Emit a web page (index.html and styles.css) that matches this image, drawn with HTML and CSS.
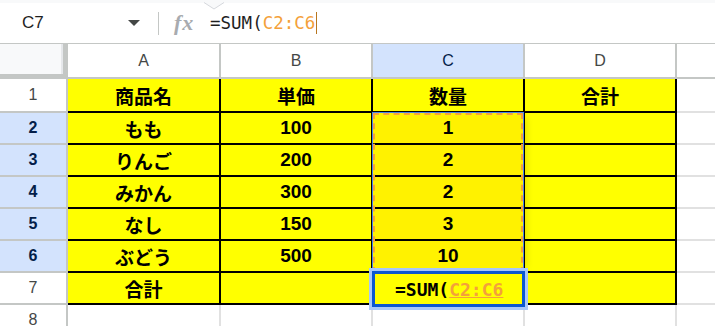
FILE: index.html
```html
<!DOCTYPE html>
<html lang="ja">
<head>
  <meta charset="UTF-8">
  <meta name="viewport" content="width=device-width, initial-scale=1.0">
  <title>Sheet - SUM</title>
  <link rel="stylesheet" href="styles.css">
</head>
<body>
  <!-- Bottom edge of a tooltip above the formula bar -->
  <div class="tip-strip">
    <svg class="tip-tail" width="20" height="8" viewBox="0 0 20 8"><path d="M0 0.5 L10 7 L20 0.5" fill="#f8f9fa" stroke="#d5d8dc" stroke-width="1"/></svg>
  </div>

  <!-- Formula bar -->
  <div class="formula-bar">
    <div class="name-box">
      <span>C7</span>
      <svg class="caret-down" width="12" height="6" viewBox="0 0 12 6"><path d="M0 0 H12 L6 6 Z" fill="#444746"/></svg>
    </div>
    <div class="divider"></div>
    <span class="fx">fx</span>
    <div class="formula">=SUM(<span class="ref">C2:C6</span><span class="cursor"></span></div>
  </div>

  <!-- Grid -->
  <div class="sheet">
    <div class="corner"></div>
    <div class="col-head">A</div>
    <div class="col-head">B</div>
    <div class="col-head selected">C</div>
    <div class="col-head">D</div>
    <div class="col-head last"></div>

    <div class="row-head">1</div>
    <div class="cell">商品名</div>
    <div class="cell">単価</div>
    <div class="cell">数量</div>
    <div class="cell">合計</div>
    <div class="blank"></div>

    <div class="row-head selected">2</div>
    <div class="cell">もも</div>
    <div class="cell">100</div>
    <div class="cell in-range">1<div class="range"></div></div>
    <div class="cell"></div>
    <div class="blank"></div>

    <div class="row-head selected">3</div>
    <div class="cell">りんご</div>
    <div class="cell">200</div>
    <div class="cell in-range">2</div>
    <div class="cell"></div>
    <div class="blank"></div>

    <div class="row-head selected">4</div>
    <div class="cell">みかん</div>
    <div class="cell">300</div>
    <div class="cell in-range">2</div>
    <div class="cell"></div>
    <div class="blank"></div>

    <div class="row-head selected">5</div>
    <div class="cell">なし</div>
    <div class="cell">150</div>
    <div class="cell in-range">3</div>
    <div class="cell"></div>
    <div class="blank"></div>

    <div class="row-head selected">6</div>
    <div class="cell">ぶどう</div>
    <div class="cell">500</div>
    <div class="cell in-range">10</div>
    <div class="cell"></div>
    <div class="blank"></div>

    <div class="row-head">7</div>
    <div class="cell">合計</div>
    <div class="cell"></div>
    <div class="cell active">=SUM(<span class="ref">C2:C6</span></div>
    <div class="cell"></div>
    <div class="blank"></div>

    <div class="row-head">8</div>
    <div class="empty"></div>
    <div class="empty"></div>
    <div class="empty"></div>
    <div class="empty"></div>
    <div class="empty last"></div>
  </div>
</body>
</html>
```

FILE: styles.css
```css
/* Reset */
* {
  margin: 0;
  padding: 0;
  box-sizing: border-box;
}

body {
  width: 715px;
  height: 326px;
  overflow: hidden;
  background: #fff;
  color: #000;
  font-family: "Liberation Sans", "Noto Sans CJK JP", Arial, sans-serif;
}

/* Tooltip edge */
.tip-strip {
  position: relative;
  height: 3px;
  background: #f8f9fa;
}

.tip-tail {
  position: absolute;
  left: 204px;
  top: 2px;
}

/* Formula bar */
.formula-bar {
  display: flex;
  align-items: center;
  height: 41px;
  border-bottom: 1px solid #c4c7c5;
}

.name-box {
  display: flex;
  align-items: center;
  width: 150px;
  padding-left: 22px;
  padding-right: 10px;
  font-size: 17px;
  color: #1f1f1f;
}

.caret-down {
  margin-left: auto;
}

.divider {
  width: 1px;
  height: 23px;
  margin-left: 8px;
  background: #c4c7c5;
}

.fx {
  display: inline-block;
  width: 24px;
  margin-left: 15px;
  font-family: "Liberation Serif", serif;
  font-style: italic;
  font-weight: bold;
  font-size: 22px;
  letter-spacing: 1px;
  color: #a8abaf;
}

.formula {
  display: flex;
  align-items: center;
  margin-left: 12px;
  font-family: "DejaVu Sans Mono", monospace;
  font-size: 17.5px;
  color: #1f1f1f;
}

.ref {
  color: #f4a13a;
}

.cursor {
  display: inline-block;
  width: 1px;
  height: 22px;
  margin-left: 1px;
  background: #b8761e;
}

/* Sheet grid */
.sheet {
  display: grid;
  grid-template-columns: 68px 153px 152px 152px 152px 38px;
  grid-template-rows: 35px 34px repeat(6, 32px) 32px;
}

.corner {
  background: #f8f9fa;
  border-right: 5px solid #c4c7c5;
  border-bottom: 5px solid #c4c7c5;
  box-shadow: inset -2px 0 #e6e8eb;
}

.col-head,
.row-head {
  display: flex;
  align-items: center;
  justify-content: center;
  border-right: 2px solid #c4c7c5;
  border-bottom: 2px solid #c4c7c5;
  font-size: 16px;
  color: #444746;
}

.col-head.last {
  border-right: none;
}

.col-head.selected {
  background: #d3e3fd;
  color: #041e49;
}

.row-head.selected {
  background: #d3e3fd;
  color: #041e49;
  font-weight: bold;
}

.cell {
  display: flex;
  align-items: center;
  justify-content: center;
  background: #ffff00;
  border-right: 2px solid #000;
  border-bottom: 2px solid #000;
  font-size: 19px;
  font-weight: bold;
}

.cell.in-range {
  position: relative;
  background: #fff200;
}

/* Dashed range of the formula, C2:C6 */
.range {
  position: absolute;
  left: 0;
  top: 0;
  right: 0;
  height: 160px;
  border: 2px dashed #f6a23c;
  box-shadow: 0 0 0 1px #4a86e8, 7px 0 8px -5px rgba(0, 0, 0, 0.18);
  z-index: 1;
  pointer-events: none;
}

/* Active cell C7 */
.cell.active {
  position: relative;
  z-index: 2;
  justify-content: flex-start;
  margin: -2px 0 -2px -1px;
  padding-left: 20px;
  border: 3px solid #0b57d0;
  box-shadow: 0 0 0 3px #a8c7fa;
  font-family: "DejaVu Sans Mono", monospace;
  font-size: 18px;
}

.cell.active .ref {
  text-decoration: underline;
}

.blank {
  border-bottom: 2px solid #e1e1e1;
}

.empty {
  border-right: 2px solid #e1e1e1;
}

.empty.last {
  border-right: none;
}
```
